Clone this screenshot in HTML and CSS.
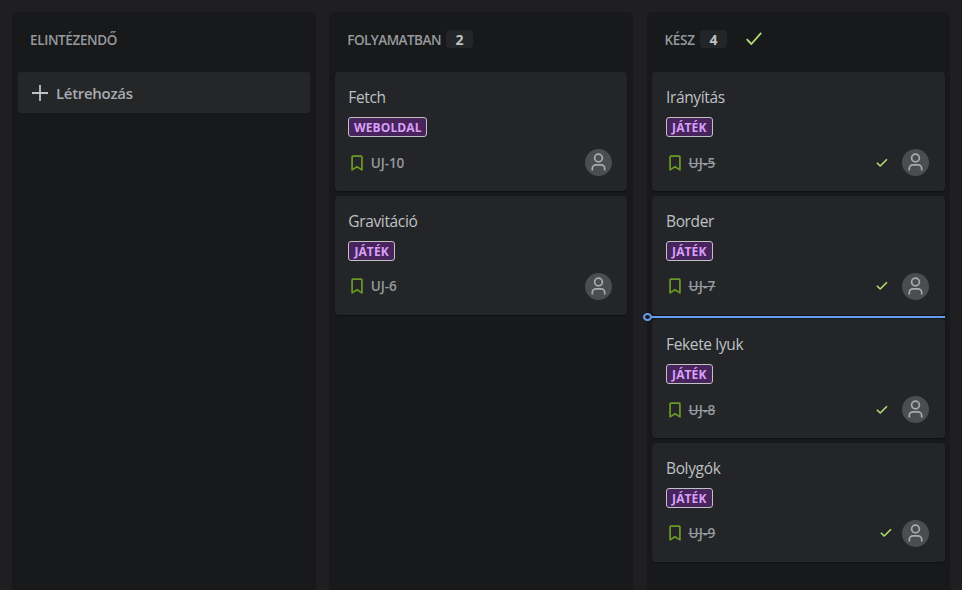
FILE: index.html
```html
<!DOCTYPE html>
<html lang="hu">
<head>
<meta charset="utf-8">
<title>Tábla</title>
<link rel="stylesheet" href="styles.css">
</head>
<body>
<svg class="defs" width="0" height="0">
  <symbol id="bookmark" viewBox="0 0 14 18"><path d="M2.9 2.1h8.2a.8.8 0 0 1 .8.8v13L7 12.8l-4.9 3.1v-13a.8.8 0 0 1 .8-.8Z"/></symbol>
  <symbol id="person" viewBox="0 0 27 27"><circle cx="13.5" cy="9" r="3.9"/><path d="M7.3 21.5v-2a3.7 3.7 0 0 1 3.7-3.7h5a3.7 3.7 0 0 1 3.7 3.7v2"/></symbol>
  <symbol id="check" viewBox="0 0 16 14"><path d="M.7 7.2 5.4 12 15.2.8"/></symbol>
  <symbol id="done" viewBox="0 0 12 10"><path d="M.9 4.8 4.2 8 11 1.2"/></symbol>
</svg>
<main class="board">
  <section class="column">
    <header class="head"><h2 class="title todo">ELINTÉZENDŐ</h2></header>
    <button class="create"><svg class="plus" viewBox="0 0 16 16"><path d="M8 0v16M0 8h16"/></svg><span class="create-text">Létrehozás</span></button>
  </section>
  <section class="column">
    <header class="head"><h2 class="title progress">FOLYAMATBAN</h2><span class="count">2</span></header>
    <div class="cards">
      <article class="card"><h3 class="name">Fetch</h3><span class="label web">WEBOLDAL</span>
        <footer class="foot"><svg class="bookmark"><use href="#bookmark"/></svg><span class="key">UJ-10</span><svg class="avatar"><use href="#person"/></svg></footer></article>
      <article class="card"><h3 class="name">Gravitáció</h3><span class="label">JÁTÉK</span>
        <footer class="foot"><svg class="bookmark"><use href="#bookmark"/></svg><span class="key">UJ-6</span><svg class="avatar"><use href="#person"/></svg></footer></article>
    </div>
  </section>
  <section class="column finished">
    <header class="head"><h2 class="title ready">KÉSZ</h2><span class="count">4</span><svg class="check"><use href="#check"/></svg></header>
    <div class="cards">
      <article class="card"><h3 class="name">Irányítás</h3><span class="label">JÁTÉK</span>
        <footer class="foot"><svg class="bookmark"><use href="#bookmark"/></svg><span class="key">UJ-5</span><svg class="done"><use href="#done"/></svg><svg class="avatar"><use href="#person"/></svg></footer></article>
      <article class="card"><h3 class="name">Border</h3><span class="label">JÁTÉK</span>
        <footer class="foot"><svg class="bookmark"><use href="#bookmark"/></svg><span class="key">UJ-7</span><svg class="done"><use href="#done"/></svg><svg class="avatar"><use href="#person"/></svg></footer><i class="drop"></i></article>
      <article class="card"><h3 class="name">Fekete lyuk</h3><span class="label">JÁTÉK</span>
        <footer class="foot"><svg class="bookmark"><use href="#bookmark"/></svg><span class="key">UJ-8</span><svg class="done"><use href="#done"/></svg><svg class="avatar"><use href="#person"/></svg></footer></article>
      <article class="card"><h3 class="name">Bolygók</h3><span class="label">JÁTÉK</span>
        <footer class="foot"><svg class="bookmark"><use href="#bookmark"/></svg><span class="key">UJ-9</span><svg class="done near"><use href="#done"/></svg><svg class="avatar"><use href="#person"/></svg></footer></article>
    </div>
  </section>
</main>
</body>
</html>
```
FILE: styles.css
```css
*, *::before { box-sizing: border-box; }
body { margin: 0; height: 590px; overflow: hidden; background: #1f1f21; color: #bfc1c4; font-family: "Open Sans", "Noto Sans", sans-serif; }
h2, h3 { margin: 0; font-weight: 400; }
svg { display: block; flex: none; fill: none; stroke-linejoin: round; }
.defs { position: absolute; }
.board { display: grid; grid-template-columns: 304px 304px 303px; column-gap: 13.3px; height: 100%; padding: 12px 0 0 12px; }
.column { min-width: 0; background: #18191a; border-radius: 6px 6px 0 0; padding: 0 6px; }
.finished { padding: 0 4.6px 0 5.4px; }
.head { display: flex; align-items: center; height: 60px; padding: 0 12px 5px; }
.title { font-size: 13.5px; font-weight: 600; line-height: 20px; color: #96999e; white-space: nowrap; }
.todo { letter-spacing: -.37px; }
.progress { letter-spacing: -.53px; }
.ready { margin-left: .4px; letter-spacing: -.2px; }
.count { width: 27px; height: 18px; margin-left: 5.2px; margin-top: -1px; border-radius: 4px; background: #242528; font-size: 14px; font-weight: 700; line-height: 19px; text-align: center; color: #bfc1c4; }
.check { width: 16px; height: 14px; margin-left: 19px; margin-top: -1px; stroke: #b3df72; stroke-width: 1.8; }
.create { display: flex; align-items: center; width: 100%; height: 41px; padding: 0 14px; border: 0; border-radius: 3px; background: #242627; color: #a9abaf; font: 600 15px/22px "Open Sans", sans-serif; }
.plus { width: 16px; height: 16px; margin-right: 8px; stroke: #bfc1c4; stroke-width: 1.8; }
.create-text { letter-spacing: -.3px; }
.cards { display: flex; flex-direction: column; gap: 4.67px; }
.card { position: relative; height: 119px; padding: 14px 15px 0 13px; border-radius: 4px; background: #242528; box-shadow: 0 1px 1px #101112; }
.finished .card { padding-left: 14px; }
.name { height: 22px; font-size: 15.5px; line-height: 22px; letter-spacing: -.35px; white-space: nowrap; }
.label { display: block; width: 46.6px; height: 20px; margin-top: 9px; border: 1px solid #bfc1c4; border-radius: 3px; background: #48245d; color: #d8a0f7; font-size: 12px; font-weight: 700; line-height: 19px; text-align: center; letter-spacing: .1px; }
.web { width: 79px; }
.foot { display: flex; align-items: center; height: 27px; margin-top: 12px; }
.bookmark { width: 14px; height: 18px; margin-left: 2px; stroke: #6a9a23; stroke-width: 1.7; }
.key { margin-left: 6.5px; font-size: 13.5px; font-weight: 600; line-height: 20px; color: #96999e; letter-spacing: -.1px; }
.finished .key { letter-spacing: .2px; text-decoration: line-through; text-decoration-thickness: 1px; }
.avatar { width: 27px; height: 27px; margin-left: auto; border-radius: 50%; background: #4b4d51; stroke: #a9abaf; stroke-width: 1.7; }
.done { width: 12px; height: 10px; margin-left: auto; stroke: #b3df72; stroke-width: 1.6; }
.done + .avatar { margin-left: 14px; margin-right: 1px; }
.done.near + .avatar { margin-left: 10px; }
.drop { position: absolute; left: 0; right: 0; top: 120px; height: 2px; background: #669df1; z-index: 1; }
.drop::before { content: ""; position: absolute; left: -9px; top: -3px; width: 9px; height: 8px; border: 2px solid #669df1; border-radius: 50%; }
```
